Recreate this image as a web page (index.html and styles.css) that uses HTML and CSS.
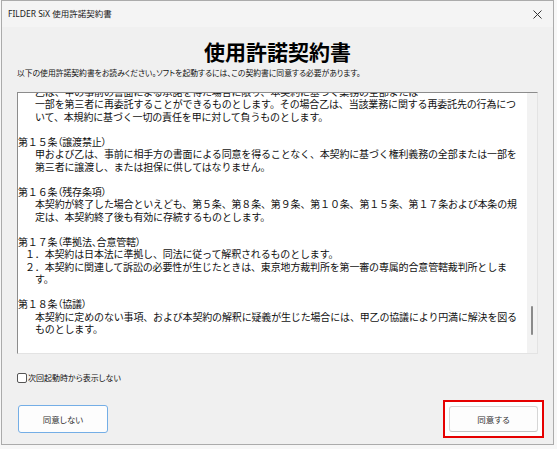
FILE: index.html
```html
<!DOCTYPE html>
<html lang="ja">
<head>
<meta charset="utf-8">
<title>FILDER SiX 使用許諾契約書</title>
<link rel="stylesheet" href="styles.css">
</head>
<body>
<div class="window">
  <div class="titlebar">
    <span class="title">FILDER SiX 使用許諾契約書</span>
    <span class="close">
      <svg width="9" height="9" viewBox="0 0 9 9"><path d="M0.5 0.5 L8.5 8.5 M8.5 0.5 L0.5 8.5" stroke="#333" stroke-width="1" fill="none"/></svg>
    </span>
  </div>
  <div class="content">
    <h1 class="heading">使用許諾契約書</h1>
    <p class="subtitle">以下の使用許諾契約書をお読みください。ソフトを起動するには、この契約書に同意する必要があります。</p>
    <div class="textbox">
      <div class="textarea">
        <div class="scroller">
          <div class="ln ind">乙は、甲の事前の書面による承諾を得た場合に限り、本契約に基づく業務の全部または</div>
          <div class="ln ind">一部を第三者に再委託することができるものとします。その場合乙は、当該業務に関する再委託先の行為につ</div>
          <div class="ln ind">いて、本規約に基づく一切の責任を甲に対して負うものとします。</div>
          <div class="ln"></div>
          <div class="ln hd">第１５条<span class="p">（</span>譲渡禁止<span class="p">）</span></div>
          <div class="ln ind">甲および乙は、事前に相手方の書面による同意を得ることなく、本契約に基づく権利義務の全部または一部を</div>
          <div class="ln ind">第三者に譲渡し、または担保に供してはなりません。</div>
          <div class="ln"></div>
          <div class="ln hd">第１６条<span class="p">（</span>残存条項<span class="p">）</span></div>
          <div class="ln ind">本契約が終了した場合といえども、第５条、第８条、第９条、第１０条、第１５条、第１７条および本条の規</div>
          <div class="ln ind">定は、本契約終了後も有効に存続するものとします。</div>
          <div class="ln"></div>
          <div class="ln hd">第１７条<span class="p">（</span>準拠法<span class="p">、</span>合意管轄<span class="p">）</span></div>
          <div class="ln li">１．本契約は日本法に準拠し、同法に従って解釈されるものとします。</div>
          <div class="ln li">２．本契約に関連して訴訟の必要性が生じたときは、東京地方裁判所を第一審の専属的合意管轄裁判所としま</div>
          <div class="ln ind">す。</div>
          <div class="ln"></div>
          <div class="ln hd">第１８条<span class="p">（</span>協議<span class="p">）</span></div>
          <div class="ln ind">本契約に定めのない事項、および本契約の解釈に疑義が生じた場合には、甲乙の協議により円満に解決を図る</div>
          <div class="ln ind">ものとします。</div>
        </div>
      </div>
      <div class="scrollbar"><div class="thumb"></div></div>
    </div>
    <label class="check-row">
      <span class="checkbox"></span>
      <span class="check-label">次回起動時から表示しない</span>
    </label>
    <div class="buttons">
      <button class="btn btn-decline">同意しない</button>
      <div class="highlight">
        <button class="btn btn-accept">同意する</button>
      </div>
    </div>
  </div>
</div>
</body>
</html>
```

FILE: styles.css
```css
html, body {
  margin: 0;
  padding: 0;
}
body {
  background: #f7f7f7;
  width: 557px;
  height: 449px;
  overflow: hidden;
  font-family: "Noto Sans CJK JP", "Noto Sans", sans-serif;
}
.window {
  margin-left: 1px;
  width: 553px;
  height: 445px;
  box-sizing: border-box;
  border: 1px solid #ababab;
  background: #f0f0f0;
  display: flex;
  flex-direction: column;
}
.titlebar {
  height: 26px;
  flex: none;
  display: flex;
  align-items: center;
  justify-content: space-between;
  padding: 0 11px 0 6px;
  background: #f4f4f4;
}
.title {
  font-family: "Noto Sans", "Noto Sans CJK JP", sans-serif;
  font-size: 8.5px;
  color: #1a1a1a;
  line-height: 12px;
}
.close {
  display: flex;
  width: 9px;
  height: 9px;
}
.content {
  flex: 1;
  display: flex;
  flex-direction: column;
  padding: 0 15px;
}
.heading {
  margin: 11px 0 0 0;
  font-size: 21px;
  line-height: 26px;
  font-weight: 700;
  text-align: center;
  color: #000;
}
.subtitle {
  margin: 3px 0 0 0;
  font-size: 7.8px;
  line-height: 12px;
  color: #111;
  font-feature-settings: "palt";
}
.textbox {
  margin-top: 13px;
  height: 262px;
  box-sizing: border-box;
  border-top: 1px solid #8c8c8c;
  border-left: 1px solid #8c8c8c;
  border-right: 1px solid #e3e3e3;
  border-bottom: 1px solid #e3e3e3;
  display: flex;
}
.textarea {
  flex: 1;
  background: #fff;
  overflow: hidden;
}
.scroller {
  margin-top: -7.5px;
}
.ln {
  height: 12.5px;
  line-height: 12.5px;
  font-size: 10px;
  letter-spacing: -0.16px;
  white-space: nowrap;
  color: #111;
}
.p {
  font-feature-settings: "palt";
}
.ind {
  padding-left: 17px;
}
.li {
  padding-left: 7px;
}
.scrollbar {
  width: 10px;
  flex: none;
  background: #f2f2f2;
  display: flex;
  flex-direction: column;
  align-items: center;
  padding-top: 213px;
  box-sizing: border-box;
}
.thumb {
  width: 2px;
  height: 29px;
  border-radius: 1px;
  background: #8a8a8a;
}
.check-row {
  margin-top: 18px;
  display: flex;
  align-items: center;
  height: 12px;
}
.checkbox {
  width: 8px;
  height: 8px;
  border: 1px solid #555;
  border-radius: 2px;
  background: #fff;
  flex: none;
}
.check-label {
  margin-left: 1px;
  font-size: 8px;
  line-height: 12px;
  color: #111;
  font-feature-settings: "palt";
}
.buttons {
  margin-top: 16px;
  display: flex;
  align-items: center;
  justify-content: space-between;
}
.btn {
  font-family: "Noto Sans CJK JP", sans-serif;
  font-size: 8.5px;
  color: #333;
  background: #fdfdfd;
  border-radius: 3px;
  padding: 0;
  margin: 0;
  box-sizing: border-box;
  font-feature-settings: "palt";
}
.btn-decline {
  margin-left: 1px;
  width: 90px;
  height: 28px;
  border: 1px solid #74aee6;
}
.highlight {
  margin-right: -6px;
  padding: 4px;
  border: 2px solid #e60000;
  background: #fff;
  display: flex;
}
.btn-accept {
  width: 89px;
  height: 26px;
  border: 1px solid #d6d6d6;
  border-bottom-color: #c4c4c4;
}
```
